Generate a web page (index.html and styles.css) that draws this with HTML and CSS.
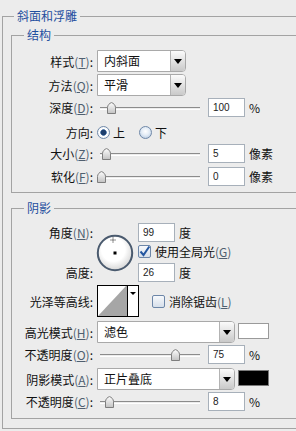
FILE: index.html
```html
<!DOCTYPE html>
<html lang="zh-CN">
<head>
  <meta charset="UTF-8" />
  <meta name="viewport" content="width=device-width, initial-scale=1.0" />
  <title>斜面和浮雕</title>
  <link rel="stylesheet" href="styles.css">
</head>
<body>
  <div class="dialog">
    <fieldset class="group outer">
      <legend>斜面和浮雕</legend>

      <fieldset class="group inner">
        <legend>结构</legend>

        <div class="row first">
          <span class="lbl">样式<span class="key">(<u>T</u>)</span>:</span>
          <div class="select short"><span class="select-value">内斜面</span><span class="select-btn"></span></div>
        </div>
        <div class="row">
          <span class="lbl">方法<span class="key">(<u>Q</u>)</span>:</span>
          <div class="select short"><span class="select-value">平滑</span><span class="select-btn"></span></div>
        </div>
        <div class="row">
          <span class="lbl">深度<span class="key">(<u>D</u>)</span>:</span>
          <div class="slider"><span class="track"></span><svg class="thumb" style="left: 10px" width="9" height="12"><use href="#thumb"/></svg></div>
          <input class="num" type="text" value="100" readonly>
          <span class="unit">%</span>
        </div>
        <div class="row dir">
          <span class="lbl">方向:</span>
          <label class="radio-opt"><span class="radio on"></span>上</label>
          <label class="radio-opt second"><span class="radio"></span>下</label>
        </div>
        <div class="row">
          <span class="lbl">大小<span class="key">(<u>Z</u>)</span>:</span>
          <div class="slider"><span class="track"></span><svg class="thumb" style="left: 5px" width="9" height="12"><use href="#thumb"/></svg></div>
          <input class="num" type="text" value="5" readonly>
          <span class="unit">像素</span>
        </div>
        <div class="row gap4">
          <span class="lbl">软化<span class="key">(<u>F</u>)</span>:</span>
          <div class="slider"><span class="track"></span><svg class="thumb" style="left: 0px" width="9" height="12"><use href="#thumb"/></svg></div>
          <input class="num" type="text" value="0" readonly>
          <span class="unit">像素</span>
        </div>
      </fieldset>

      <fieldset class="group inner shadow">
        <legend>阴影</legend>

        <div class="angle">
          <span class="lbl a-lbl1">角度<span class="key">(<u>N</u>)</span>:</span>
          <svg class="dial" width="38" height="38" viewBox="0 0 38 38">
            <defs>
              <radialGradient id="dialFill" cx="0.45" cy="0.4" r="0.62">
                <stop offset="0.55" stop-color="#ffffff"/>
                <stop offset="1" stop-color="#d4d4d4"/>
              </radialGradient>
            </defs>
            <circle cx="19" cy="19" r="17.2" fill="url(#dialFill)" stroke="#4a5a6e" stroke-width="2"/>
            <path d="M17 3.5v5M14.5 6h5" stroke="#222" stroke-width="1" stroke-dasharray="1 1"/>
            <rect x="17.5" y="17.5" width="3" height="3" fill="#000"/>
          </svg>
          <div class="field a-f1">
            <input class="num" type="text" value="99" readonly>
            <span class="unit">度</span>
          </div>
          <label class="check a-chk">
            <span class="box"><svg width="11" height="11" viewBox="0 0 11 11"><path d="M1.5 5.5l3 3.5 5.8-8.5" fill="none" stroke="#2356a0" stroke-width="2"/></svg></span>使用全局光<span class="key">(<u>G</u>)</span>
          </label>
          <span class="lbl a-lbl2">高度:</span>
          <div class="field a-f2">
            <input class="num" type="text" value="26" readonly>
            <span class="unit">度</span>
          </div>
        </div>

        <div class="row contour-row">
          <span class="lbl">光泽等高线:</span>
          <div class="contour">
            <span class="contour-preview">
              <svg width="29" height="30" viewBox="0 0 29 30"><polygon points="0,30 28,0 29,0 29,30" fill="#a6a6a6"/></svg>
            </span>
            <span class="contour-btn"></span>
          </div>
          <label class="check aa">
            <span class="box"></span>消除锯齿<span class="key">(<u>L</u>)</span>
          </label>
        </div>

        <div class="row gap4">
          <span class="lbl">高光模式<span class="key">(<u>H</u>)</span>:</span>
          <div class="select wide"><span class="select-value">滤色</span><span class="select-btn"></span></div>
          <span class="swatch white"></span>
        </div>
        <div class="row">
          <span class="lbl">不透明度<span class="key">(<u>O</u>)</span>:</span>
          <div class="slider"><span class="track"></span><svg class="thumb" style="left: 74px" width="9" height="12"><use href="#thumb"/></svg></div>
          <input class="num" type="text" value="75" readonly>
          <span class="unit">%</span>
        </div>
        <div class="row gap4">
          <span class="lbl">阴影模式<span class="key">(<u>A</u>)</span>:</span>
          <div class="select wide"><span class="select-value">正片叠底</span><span class="select-btn"></span></div>
          <span class="swatch black"></span>
        </div>
        <div class="row">
          <span class="lbl">不透明度<span class="key">(<u>C</u>)</span>:</span>
          <div class="slider"><span class="track"></span><svg class="thumb" style="left: 8px" width="9" height="12"><use href="#thumb"/></svg></div>
          <input class="num" type="text" value="8" readonly>
          <span class="unit">%</span>
        </div>
      </fieldset>
    </fieldset>
  </div>

  <svg class="defs" width="0" height="0">
    <defs>
      <linearGradient id="thumbFill" x1="0" y1="0" x2="0" y2="1">
        <stop offset="0" stop-color="#fdfdfd"/>
        <stop offset="1" stop-color="#c2c2c2"/>
      </linearGradient>
      <symbol id="thumb" viewBox="0 0 9 12">
        <path d="M0.5 11.5V5.5C0.5 3.2 2.5 1.2 4.5 0.6C6.5 1.2 8.5 3.2 8.5 5.5V11.5Z" fill="url(#thumbFill)" stroke="#7e7e7e"/>
      </symbol>
    </defs>
  </svg>
</body>
</html>
```

FILE: styles.css
```css
body {
  margin: 0;
  background: #ececec;
  color: #111;
  font-family: "Noto Sans CJK SC", "Noto Sans", sans-serif;
  font-size: 12px;
  overflow: hidden;
}
.defs {
  display: block;
  height: 0;
}

.group {
  margin: 0;
  padding: 0;
  min-width: 0;
  border: 1px solid #a3a3a3;
  border-right: 0;
}
.group > legend {
  margin-left: 12px;
  padding: 0 3px;
  height: 16px;
  line-height: 16px;
  color: #1f4f9f;
}
.outer {
  margin: 8px 0 0 2px;
  padding-bottom: 9px;
}
.outer > legend {
  margin-left: 11px;
}
.inner {
  margin: 3px 0 0 8px;
  padding: 7px 0 6px;
}
.shadow {
  margin-top: 7px;
  padding-bottom: 7px;
}

/* rows */
.row {
  display: flex;
  align-items: center;
  margin-top: 2px;
}
.row.first {
  margin-top: 0;
}
.row.gap4 {
  margin-top: 4px;
}
.row.dir {
  height: 20px;
  margin-top: 5px;
}
.lbl {
  flex: none;
  width: 81px;
  margin-right: 4px;
  text-align: right;
  white-space: nowrap;
}
.key {
  color: #4f5f70;
}
.key u {
  text-underline-offset: 1px;
}

/* dropdowns */
.select {
  display: flex;
  box-sizing: border-box;
  height: 22px;
  border: 1px solid #a9a9a9;
  border-radius: 0 4px 4px 0;
  background: #fff;
}
.select.short {
  width: 89px;
}
.select.wide {
  width: 138px;
}
.select-value {
  flex: 1;
  padding-left: 6px;
  line-height: 20px;
  white-space: nowrap;
}
.select-btn {
  width: 14px;
  display: flex;
  align-items: center;
  justify-content: center;
  border-left: 1px solid #b3b3b3;
  border-radius: 0 3px 3px 0;
  background: linear-gradient(#fbfbfb, #c9c9c9);
}
.select-btn::after {
  content: "";
  border-left: 4px solid transparent;
  border-right: 4px solid transparent;
  border-top: 5px solid #000;
}

/* sliders */
.slider {
  position: relative;
  flex: none;
  width: 111px;
  height: 19px;
}
.track {
  display: block;
  margin: 9px 0 0 3px;
  width: 100px;
  height: 1px;
  border-top: 1px solid #8c8c8c;
  border-bottom: 1px solid #fff;
}
.thumb {
  position: absolute;
  top: 4px;
}

/* number fields */
.num {
  box-sizing: border-box;
  width: 37px;
  height: 19px;
  margin: 0;
  padding: 0 0 0 4px;
  border: 1px solid #a7b0ba;
  background: #fff;
  color: #222;
  font: 10px "Liberation Sans", Arial, sans-serif;
  outline: none;
}
.unit {
  margin-left: 4px;
}
.field {
  display: flex;
  align-items: center;
  align-self: start;
}

/* radios & checkboxes */
.radio-opt {
  display: flex;
  align-items: center;
}
.radio-opt.second {
  margin-left: 14px;
}
.radio {
  box-sizing: border-box;
  width: 13px;
  height: 13px;
  margin-right: 3px;
  border-radius: 50%;
  border: 1px solid #6f88a8;
  background: radial-gradient(circle at 50% 40%, #fff 0, #e3ecf6 45%, #a9bfd9 100%);
}
.radio.on {
  background: radial-gradient(circle, #1d3f6e 0, #1d3f6e 2.4px, #5f83b0 3px, #fff 3.6px, #e4ecf5 100%);
}
.check {
  display: flex;
  align-items: center;
  white-space: nowrap;
}
.box {
  box-sizing: border-box;
  width: 13px;
  height: 13px;
  margin-right: 4px;
  border: 1px solid #6c86a8;
  border-radius: 2px;
  background: linear-gradient(#f7f9fc, #d6dfea);
}
.box svg {
  display: block;
  overflow: visible;
}
.check.aa {
  margin-left: 13px;
}

/* angle */
.angle {
  display: grid;
  grid-template-columns: 85px 41px auto;
  grid-template-rows: 21px 19px 19px;
}
.angle .lbl {
  align-self: start;
  line-height: 19px;
}
.a-lbl1 { grid-column: 1; grid-row: 1; }
.a-lbl2 { grid-column: 1; grid-row: 3; }
.a-f1 { grid-column: 3; grid-row: 1; }
.a-f2 { grid-column: 3; grid-row: 3; }
.a-chk {
  grid-column: 3;
  grid-row: 2;
  align-self: start;
  margin-top: 1px;
  height: 13px;
}
.dial {
  grid-column: 2;
  grid-row: 1 / 4;
  align-self: start;
  margin: 11px 0 0 -1px;
}

/* contour */
.contour-row {
  margin-top: 3px;
}
.contour {
  display: flex;
  box-sizing: border-box;
  width: 42px;
  height: 32px;
  border: 1px solid #000;
  background: #fff;
}
.contour-preview {
  border-right: 1px solid #000;
}
.contour-preview svg {
  display: block;
}
.contour-btn {
  flex: 1;
  display: flex;
  align-items: flex-start;
  justify-content: center;
  padding-top: 6px;
}
.contour-btn::after {
  content: "";
  border-left: 3px solid transparent;
  border-right: 3px solid transparent;
  border-top: 3px solid #000;
}

/* colour swatches */
.swatch {
  box-sizing: border-box;
  width: 31px;
  height: 16px;
  margin: 2px 0 0 3px;
  align-self: flex-start;
  border: 1px solid #9a9a9a;
}
.swatch.white {
  background: #fff;
}
.swatch.black {
  background: #000;
  border-color: #7a7a7a;
}
```
